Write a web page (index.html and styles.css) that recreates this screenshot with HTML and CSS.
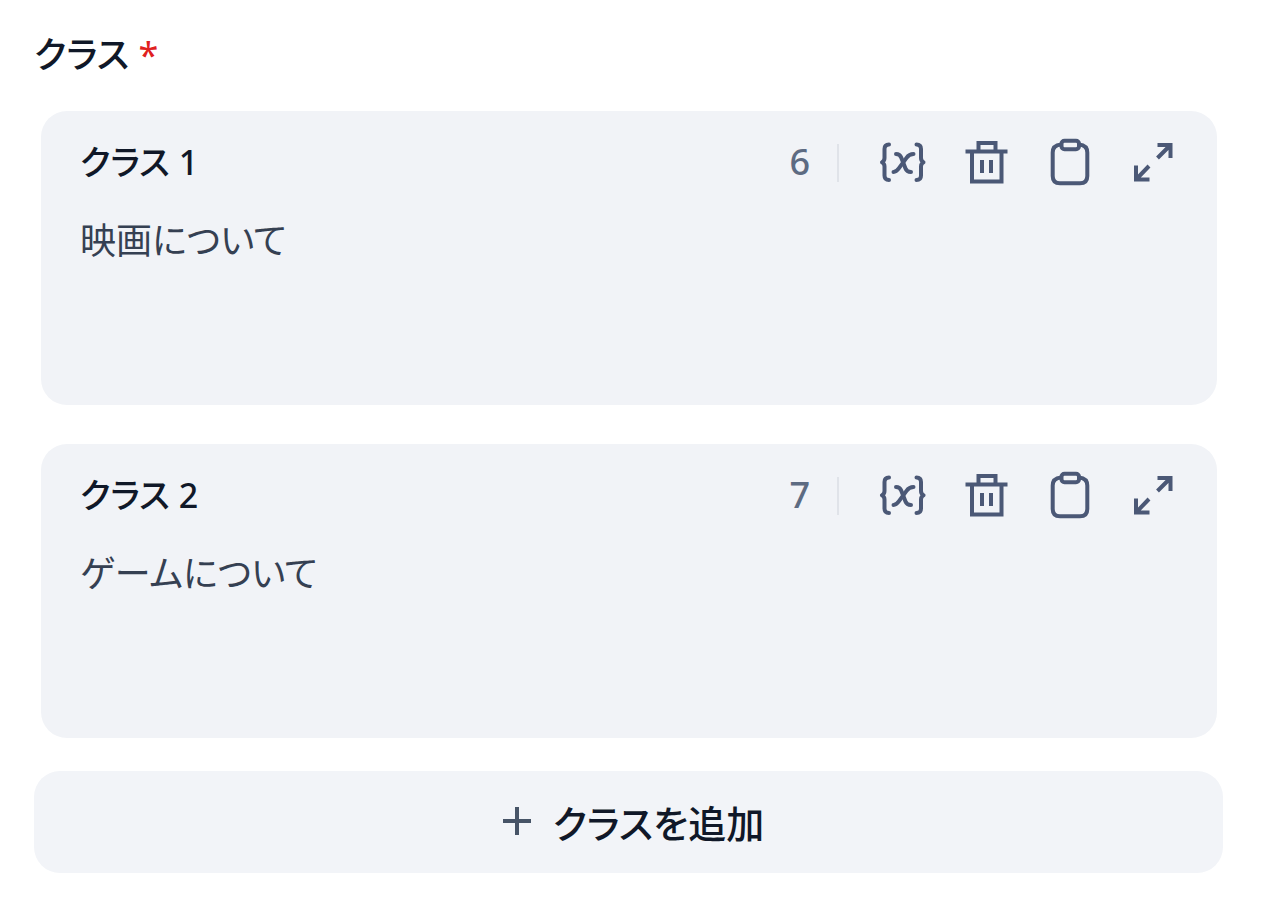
FILE: index.html
```
<!DOCTYPE html>
<html lang="ja">

<head>
    <meta charset="UTF-8">
    <meta name="viewport" content="width=device-width, initial-scale=1.0">
    <title>クラス</title>
    <link rel="stylesheet" href="styles.css">
</head>

<body>
    <!-- shared icons -->
    <svg class="sprite" aria-hidden="true">
        <symbol id="icon-variable" viewBox="0 0 50 50">
            <path d="M11 6.5C8 6.5 6.5 8 6.5 11v9c0 2-1 3.5-2.500 4.300 1.500.8 2.500 2.300 2.500 4.300v9c0 3 1.500 4.500 4.500 4.500" />
            <path d="M38.500 6.500c3 0 4.500 1.500 4.500 4.500v9c0 2 1 3.500 2.500 4.300-1.500.8-2.500 2.300-2.500 4.300v9c0 3-1.500 4.500-4.500 4.500" />
            <path d="M18 16c3 0 4.200.8 5.200 3.500l4.300 11C28.500 33.200 30 34 33 34" />
            <path d="M35.500 16c-3.500 0-5 1-7 3.800l-7.500 10.400c-2 2.800-3 3.800-5.500 3.800" />
        </symbol>
        <symbol id="icon-trash" viewBox="0 0 50 50">
            <path d="M17.5 13V5h17v8" />
            <path d="M4.5 13.5h42" />
            <path d="M11 13.5v30h29.5v-30" />
            <path d="M21 22v13M30 22v13" />
        </symbol>
        <symbol id="icon-clipboard" viewBox="0 0 50 50">
            <path d="M17 6.5c-5 .5-8.300 2.500-8.300 8V38c0 5 2.300 7.300 7.300 7.300h20c5 0 7.300-2.300 7.300-7.300V14.500c0-5.500-3.300-7.500-8.300-8" />
            <rect x="17.5" y="2.7" width="17.5" height="8.5" rx="3" />
        </symbol>
        <symbol id="icon-expand" viewBox="0 0 50 50">
            <path d="M30.5 7h13v13M43 7.5L30.5 20" />
            <path d="M9 27.5v14h13.5M9.5 41L22 28" />
        </symbol>
    </svg>

    <main class="panel">
        <h1 class="title">クラス <span class="required">*</span></h1>

        <div class="class-list">
            <section class="card">
                <div class="card-head">
                    <label class="card-name" for="class1">クラス 1</label>
                    <span class="count">6</span>
                    <span class="divider"></span>
                    <div class="actions">
                        <button type="button" class="icon-btn" aria-label="変数"><svg><use href="#icon-variable" /></svg></button>
                        <button type="button" class="icon-btn sharp" aria-label="削除"><svg><use href="#icon-trash" /></svg></button>
                        <button type="button" class="icon-btn" aria-label="コピー"><svg><use href="#icon-clipboard" /></svg></button>
                        <button type="button" class="icon-btn sharp" aria-label="拡大"><svg><use href="#icon-expand" /></svg></button>
                    </div>
                </div>
                <textarea class="card-text" id="class1" rows="3">映画について</textarea>
            </section>

            <section class="card">
                <div class="card-head">
                    <label class="card-name" for="class2">クラス 2</label>
                    <span class="count">7</span>
                    <span class="divider"></span>
                    <div class="actions">
                        <button type="button" class="icon-btn" aria-label="変数"><svg><use href="#icon-variable" /></svg></button>
                        <button type="button" class="icon-btn sharp" aria-label="削除"><svg><use href="#icon-trash" /></svg></button>
                        <button type="button" class="icon-btn" aria-label="コピー"><svg><use href="#icon-clipboard" /></svg></button>
                        <button type="button" class="icon-btn sharp" aria-label="拡大"><svg><use href="#icon-expand" /></svg></button>
                    </div>
                </div>
                <textarea class="card-text" id="class2" rows="3">ゲームについて</textarea>
            </section>
        </div>

        <button type="button" class="add-btn">
            <svg class="plus" viewBox="0 0 48 48" aria-hidden="true"><path d="M24 10v28M10 24h28" /></svg>
            クラスを追加
        </button>
    </main>
</body>

</html>
```
FILE: styles.css
```
* {
    box-sizing: border-box;
}

body {
    margin: 0;
    background: #fff;
    color: #101828;
    font-family: "Noto Sans", "Noto Sans CJK JP", sans-serif;
    font-feature-settings: "palt";
}

button,
textarea {
    font-family: inherit;
    font-feature-settings: inherit;
    border: 0;
    padding: 0;
}

.sprite {
    display: none;
}

.panel {
    padding: 24px 39px 40px 34px;
}

.title {
    margin: 0;
    font-size: 36px;
    font-weight: 500;
    line-height: 62px;
}

.required {
    color: #e02020;
    font-weight: 400;
}

.class-list {
    display: flex;
    flex-direction: column;
    gap: 39px;
    padding: 25px 6px 33px 7px;
}

.card {
    padding: 27px 40px 24px 39px;
    border-radius: 26px;
    background: #f1f3f7;
}

.card-head {
    display: flex;
    align-items: center;
    height: 50px;
}

.card-name,
.count {
    padding-bottom: 2px;
    font-weight: 500;
    line-height: 48px;
}

.card-name {
    flex: 1;
    font-size: 34px;
}

.count {
    color: #5d6b82;
    font-size: 36px;
}

.divider {
    width: 2px;
    height: 38px;
    margin: 0 39px 0 27px;
    background: #e0e3e9;
}

.actions {
    display: flex;
    gap: 33px;
}

.icon-btn {
    width: 50px;
    height: 50px;
    background: none;
    color: #4b5876;
    cursor: pointer;
}

.icon-btn svg {
    display: block;
    width: 50px;
    height: 50px;
    fill: none;
    stroke: currentColor;
    stroke-width: 4;
    stroke-linecap: round;
    stroke-linejoin: round;
}

.icon-btn.sharp svg {
    stroke-linecap: butt;
    stroke-linejoin: miter;
}

.card-text {
    display: block;
    width: 100%;
    height: 168px;
    margin-top: 25px;
    background: transparent;
    color: #354052;
    font-size: 36px;
    font-weight: 400;
    line-height: 56px;
    resize: none;
    outline: none;
}

.add-btn {
    display: flex;
    align-items: center;
    justify-content: center;
    gap: 12px;
    width: 100%;
    height: 102px;
    padding-bottom: 2px;
    border-radius: 26px;
    background: #f2f4f8;
    color: #101828;
    font-size: 38px;
    font-weight: 500;
    cursor: pointer;
}

.plus {
    width: 48px;
    height: 48px;
    fill: none;
    stroke: #475467;
    stroke-width: 4;
}
```
